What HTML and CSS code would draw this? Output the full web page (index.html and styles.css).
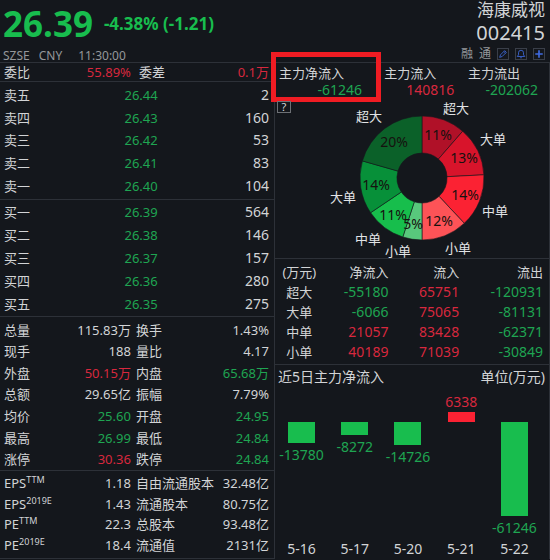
FILE: index.html
```html
<!DOCTYPE html>
<html lang="zh-CN">
<head>
  <meta charset="UTF-8" />
  <title>海康威视 002415</title>
  <link rel="stylesheet" href="styles.css">
</head>
<body>
  <header class="quote-header">
    <div class="quote">
      <div class="price-line">
        <span class="price">26.39</span>
        <span class="change">-4.38% (-1.21)</span>
      </div>
      <div class="market"><span>SZSE</span><span>CNY</span><span class="time">11:30:00</span></div>
    </div>
    <div class="stock">
      <h1 class="stock-name">海康威视</h1>
      <div class="stock-code">002415</div>
      <div class="tools">
        <span class="tag">融</span>
        <span class="tag">通</span>
        <button class="tool" aria-label="编辑">
          <svg viewBox="0 0 12 12"><path d="M2 10l1-3 5-5 2 2-5 5zM7 3l2 2" /></svg>
        </button>
        <button class="tool" aria-label="提醒">
          <svg viewBox="0 0 12 12"><path d="M1.500 9h9L9 7V4.500a3 3 0 0 0-6 0V7zM5 10.500h2" /></svg>
        </button>
        <button class="tool" aria-label="添加">
          <svg viewBox="0 0 12 12"><path class="plus" d="M6 1.500v9M1.500 6h9" /></svg>
        </button>
      </div>
    </div>
  </header>

  <main class="board">
    <div class="left">
      <section class="ratio pairs">
        <span>委比</span><b class="up">55.89%</b><span class="second">委差</span><b class="up">0.1万</b>
      </section>

      <section class="orders sell">
        <div class="row"><span>卖五</span><b class="down">26.44</b><b class="vol">2</b></div>
        <div class="row"><span>卖四</span><b class="down">26.43</b><b class="vol">160</b></div>
        <div class="row"><span>卖三</span><b class="down">26.42</b><b class="vol">53</b></div>
        <div class="row"><span>卖二</span><b class="down">26.41</b><b class="vol">83</b></div>
        <div class="row"><span>卖一</span><b class="down">26.40</b><b class="vol">104</b></div>
      </section>

      <section class="orders buy">
        <div class="row"><span>买一</span><b class="down">26.39</b><b class="vol">564</b></div>
        <div class="row"><span>买二</span><b class="down">26.38</b><b class="vol">146</b></div>
        <div class="row"><span>买三</span><b class="down">26.37</b><b class="vol">157</b></div>
        <div class="row"><span>买四</span><b class="down">26.36</b><b class="vol">280</b></div>
        <div class="row"><span>买五</span><b class="down">26.35</b><b class="vol">275</b></div>
      </section>

      <section class="stats pairs">
        <span>总量</span><b>115.83万</b><span>换手</span><b>1.43%</b>
        <span>现手</span><b>188</b><span>量比</span><b>4.17</b>
        <span>外盘</span><b class="up">50.15万</b><span>内盘</span><b class="down">65.68万</b>
        <span>总额</span><b>29.65亿</b><span>振幅</span><b>7.79%</b>
        <span>均价</span><b class="down">25.60</b><span>开盘</span><b class="down">24.95</b>
        <span>最高</span><b class="down">26.99</b><span>最低</span><b class="down">24.84</b>
        <span>涨停</span><b class="up">30.36</b><span>跌停</span><b class="down">24.84</b>
      </section>

      <section class="finance pairs">
        <span>EPS<sup>TTM</sup></span><b>1.18</b><span>自由流通股本</span><b>32.48亿</b>
        <span>EPS<sup>2019E</sup></span><b>1.43</b><span>流通股本</span><b>80.75亿</b>
        <span>PE<sup>TTM</sup></span><b>22.3</b><span>总股本</span><b>93.48亿</b>
        <span>PE<sup>2019E</sup></span><b>18.4</b><span>流通值</span><b>2131亿</b>
      </section>
    </div>

    <div class="right">
      <section class="flow">
        <div class="flow-summary">
          <div class="flow-item"><span>主力净流入</span><b class="down">-61246</b></div>
          <div class="flow-item"><span>主力流入</span><b class="up">140816</b></div>
          <div class="flow-item"><span>主力流出</span><b class="down">-202062</b></div>
        </div>
        <div class="highlight"></div>
        <button class="help" aria-label="帮助">?</button>
        <svg class="pie" viewBox="0 -3 274 160" role="img" aria-label="资金流向">
          <g class="slices" transform="translate(147 77)">
            <path fill="#b01128" d="M0 -62A62 62 0 0 1 40.700 -46.800L16.400 -18.900A25 25 0 0 0 0 -25z" />
            <path fill="#d8142b" d="M40.700 -46.800A62 62 0 0 1 61.900 -3.200L25 -1.300A25 25 0 0 0 16.400 -18.900z" />
            <path fill="#fb2233" d="M61.900 -3.200A62 62 0 0 1 42.300 45.300L17 18.300A25 25 0 0 0 25 -1.300z" />
            <path fill="#fd5357" d="M42.300 45.300A62 62 0 0 1 0 62V25A25 25 0 0 0 17 18.300z" />
            <path fill="#58c87c" d="M0 62A62 62 0 0 1 -19.200 59L-7.700 23.800A25 25 0 0 0 0 25z" />
            <path fill="#17be4c" d="M-19.200 59A62 62 0 0 1 -51.400 34.700L-20.700 14A25 25 0 0 0 -7.700 23.800z" />
            <path fill="#079039" d="M-51.400 34.700A62 62 0 0 1 -59.600 -17.100L-24 -6.900A25 25 0 0 0 -20.700 14z" />
            <path fill="#0b6129" d="M-59.600 -17.100A62 62 0 0 1 0 -62V-25A25 25 0 0 0 -24 -6.900z" />
          </g>
          <g class="pie-percent">
            <text x="163" y="39">11%</text>
            <text x="189" y="62">13%</text>
            <text x="190" y="99">14%</text>
            <text x="164" y="125">12%</text>
            <text x="138" y="128">5%</text>
            <text x="118" y="119">11%</text>
            <text x="101" y="89">14%</text>
            <text x="119" y="46">20%</text>
          </g>
          <g class="pie-label">
            <text x="181" y="12">超大</text>
            <text x="218" y="43">大单</text>
            <text x="220" y="115">中单</text>
            <text x="183" y="152">小单</text>
            <text x="123" y="155">小单</text>
            <text x="93" y="143">中单</text>
            <text x="68" y="101">大单</text>
            <text x="94" y="20">超大</text>
          </g>
        </svg>
      </section>

      <section class="detail">
        <table class="flow-table">
          <thead>
            <tr><th class="kind">(万元)</th><th class="net">净流入</th><th class="in">流入</th><th>流出</th></tr>
          </thead>
          <tbody>
            <tr><th>超大</th><td class="down">-55180</td><td class="up">65751</td><td class="down">-120931</td></tr>
            <tr><th>大单</th><td class="down">-6066</td><td class="up">75065</td><td class="down">-81131</td></tr>
            <tr><th>中单</th><td class="up">21057</td><td class="up">83428</td><td class="down">-62371</td></tr>
            <tr><th>小单</th><td class="up">40189</td><td class="up">71039</td><td class="down">-30849</td></tr>
          </tbody>
        </table>
      </section>

      <section class="history">
        <div class="history-title"><h2>近5日主力净流入</h2><span>单位(万元)</span></div>
        <div class="bars">
          <div class="day">
            <div class="above"></div>
            <div class="below down"><i class="bar" style="height: 21px"></i>-13780</div>
            <div class="date">5-16</div>
          </div>
          <div class="day">
            <div class="above"></div>
            <div class="below down"><i class="bar" style="height: 13px"></i>-8272</div>
            <div class="date">5-17</div>
          </div>
          <div class="day">
            <div class="above"></div>
            <div class="below down"><i class="bar" style="height: 23px"></i>-14726</div>
            <div class="date">5-20</div>
          </div>
          <div class="day">
            <div class="above up">6338<i class="bar" style="height: 10px"></i></div>
            <div class="below"></div>
            <div class="date">5-21</div>
          </div>
          <div class="day">
            <div class="above"></div>
            <div class="below down"><i class="bar" style="height: 94px"></i>-61246</div>
            <div class="date">5-22</div>
          </div>
        </div>
      </section>
    </div>
  </main>
</body>
</html>
```
FILE: styles.css
```css
* {
  box-sizing: border-box;
}
body {
  margin: 0;
  background-color: #14171c;
  color: #d2d4d6;
  font-family: "Noto Sans", "Noto Sans CJK SC", sans-serif;
  font-size: 13px;
  line-height: 20px;
}
b, th, h1, h2 {
  font-weight: normal;
}
h1, h2 {
  margin: 0;
}
button {
  padding: 0;
  background: none;
  font-family: inherit;
  cursor: pointer;
}
.up {
  color: #d8283e;
}
.down {
  color: #1fa552;
}

/* header */
.quote-header {
  display: flex;
  justify-content: space-between;
  height: 63px;
  padding: 0 5px 0 3px;
  border-bottom: 1px solid #2d3138;
}
.price-line {
  display: flex;
  align-items: center;
  gap: 11px;
  height: 48px;
  color: #18bd4e;
  font-weight: bold;
}
.price {
  font-size: 35px;
}
.change {
  font-size: 17px;
}
.market {
  display: flex;
  gap: 9px;
  color: #94979b;
  font-size: 12px;
  line-height: 16px;
}
.time {
  margin-left: 7px;
}
.stock {
  text-align: right;
}
.stock-name {
  font-size: 17px;
  line-height: 20px;
}
.stock-code {
  font-size: 20px;
  line-height: 26px;
}
.tools {
  display: flex;
  justify-content: flex-end;
  align-items: center;
  gap: 6px;
  line-height: 16px;
}
.tag {
  color: #94979b;
  font-size: 12px;
}
.tool {
  width: 12px;
  height: 12px;
  border: 1px solid #3a3f49;
}
.tool svg {
  display: block;
  width: 100%;
  fill: none;
  stroke: #3f6be0;
}
.tool .plus {
  stroke-width: 2;
}

.board {
  display: grid;
  grid-template-columns: 1fr 1fr;
}
.left {
  border-right: 1px solid #2d3138;
}
.right {
  border-right: 1px solid #2d3138;
}
.left section {
  padding: 0 5px 0 4px;
  border-bottom: 1px solid #2d3138;
}

/* label and value pairs, two per line */
.pairs {
  display: grid;
  grid-template-columns: 20% 26% auto 1fr;
  grid-auto-rows: 1fr;
  align-items: center;
  column-gap: 5px;
}
.pairs span {
  white-space: nowrap;
}
.pairs b {
  text-align: right;
}
.left .ratio {
  line-height: 18px;
}
.ratio .second {
  padding-left: 3px;
}

.orders {
  display: grid;
  grid-auto-rows: 1fr;
}
.left .sell {
  min-height: 118px;
  padding-top: 2px;
  padding-bottom: 2px;
}
.left .buy {
  min-height: 117px;
  padding-top: 1px;
  padding-bottom: 1px;
}
.row {
  display: grid;
  grid-template-columns: 29% 29% 1fr;
  align-items: center;
}
.row b {
  text-align: right;
}
.vol {
  font-size: 14px;
}
.left .stats {
  min-height: 154px;
  padding-top: 2px;
}
.left .finance {
  min-height: 88px;
  padding-top: 2px;
  padding-bottom: 3px;
}
sup {
  font-size: 9px;
  line-height: 0;
}

/* main capital flow */
.flow {
  position: relative;
  border-bottom: 1px solid #2d3138;
}
.flow-summary {
  display: grid;
  grid-template-columns: 39% 31% 1fr;
  justify-items: start;
  padding: 2px 0 0 4px;
}
.flow-item {
  display: flex;
  flex-direction: column;
  line-height: 17px;
}
.flow-item b {
  margin-right: -18px;
  font-size: 14px;
  line-height: 16px;
  text-align: right;
}
.highlight {
  position: absolute;
  top: -11px;
  left: -4px;
  width: 110px;
  height: 50px;
  border: 5px solid #f01c23;
}
.help {
  position: absolute;
  top: 38px;
  left: 2px;
  width: 14px;
  height: 12px;
  border: 1px solid #6d7075;
  color: #d2d4d6;
  font-size: 11px;
  line-height: 10px;
}
.pie {
  display: block;
  width: 100%;
  overflow: visible;
}
.slices path {
  stroke: #14171c;
  stroke-opacity: .6;
}
.pie-percent {
  fill: #16110f;
  font-size: 14px;
  text-anchor: middle;
}
.pie-label {
  fill: #e2e4e6;
  font-size: 13px;
  text-anchor: middle;
}

.detail {
  padding: 3px 6px 2px 6px;
  border-bottom: 1px solid #2d3138;
}
.flow-table {
  width: 100%;
  border-collapse: collapse;
  table-layout: fixed;
}
.flow-table th,
.flow-table td {
  height: 20px;
  padding: 0;
  text-align: right;
}
.flow-table td {
  font-size: 14px;
}
.flow-table th:first-child {
  text-align: center;
  white-space: nowrap;
}
.flow-table .kind {
  width: 14%;
}
.flow-table .net,
.flow-table .in {
  width: 27%;
}

/* last five days */
.history-title {
  display: flex;
  justify-content: space-between;
  padding: 2px 4px 0 3px;
  font-size: 14px;
}
.history-title h2 {
  font-size: 14px;
}
.bars {
  display: grid;
  grid-template-columns: repeat(5, 1fr);
  padding-right: 8px;
  font-size: 14px;
}
.day,
.above,
.below {
  display: flex;
  flex-direction: column;
  align-items: center;
}
.above {
  justify-content: flex-end;
  height: 35px;
}
.below {
  height: 117px;
}
.below .bar {
  margin-bottom: 2px;
}
.bar {
  flex: none;
  width: 27px;
  background-color: #18bd4e;
}
.up .bar {
  background-color: #fb2233;
}
.date {
  line-height: 20px;
}
```
